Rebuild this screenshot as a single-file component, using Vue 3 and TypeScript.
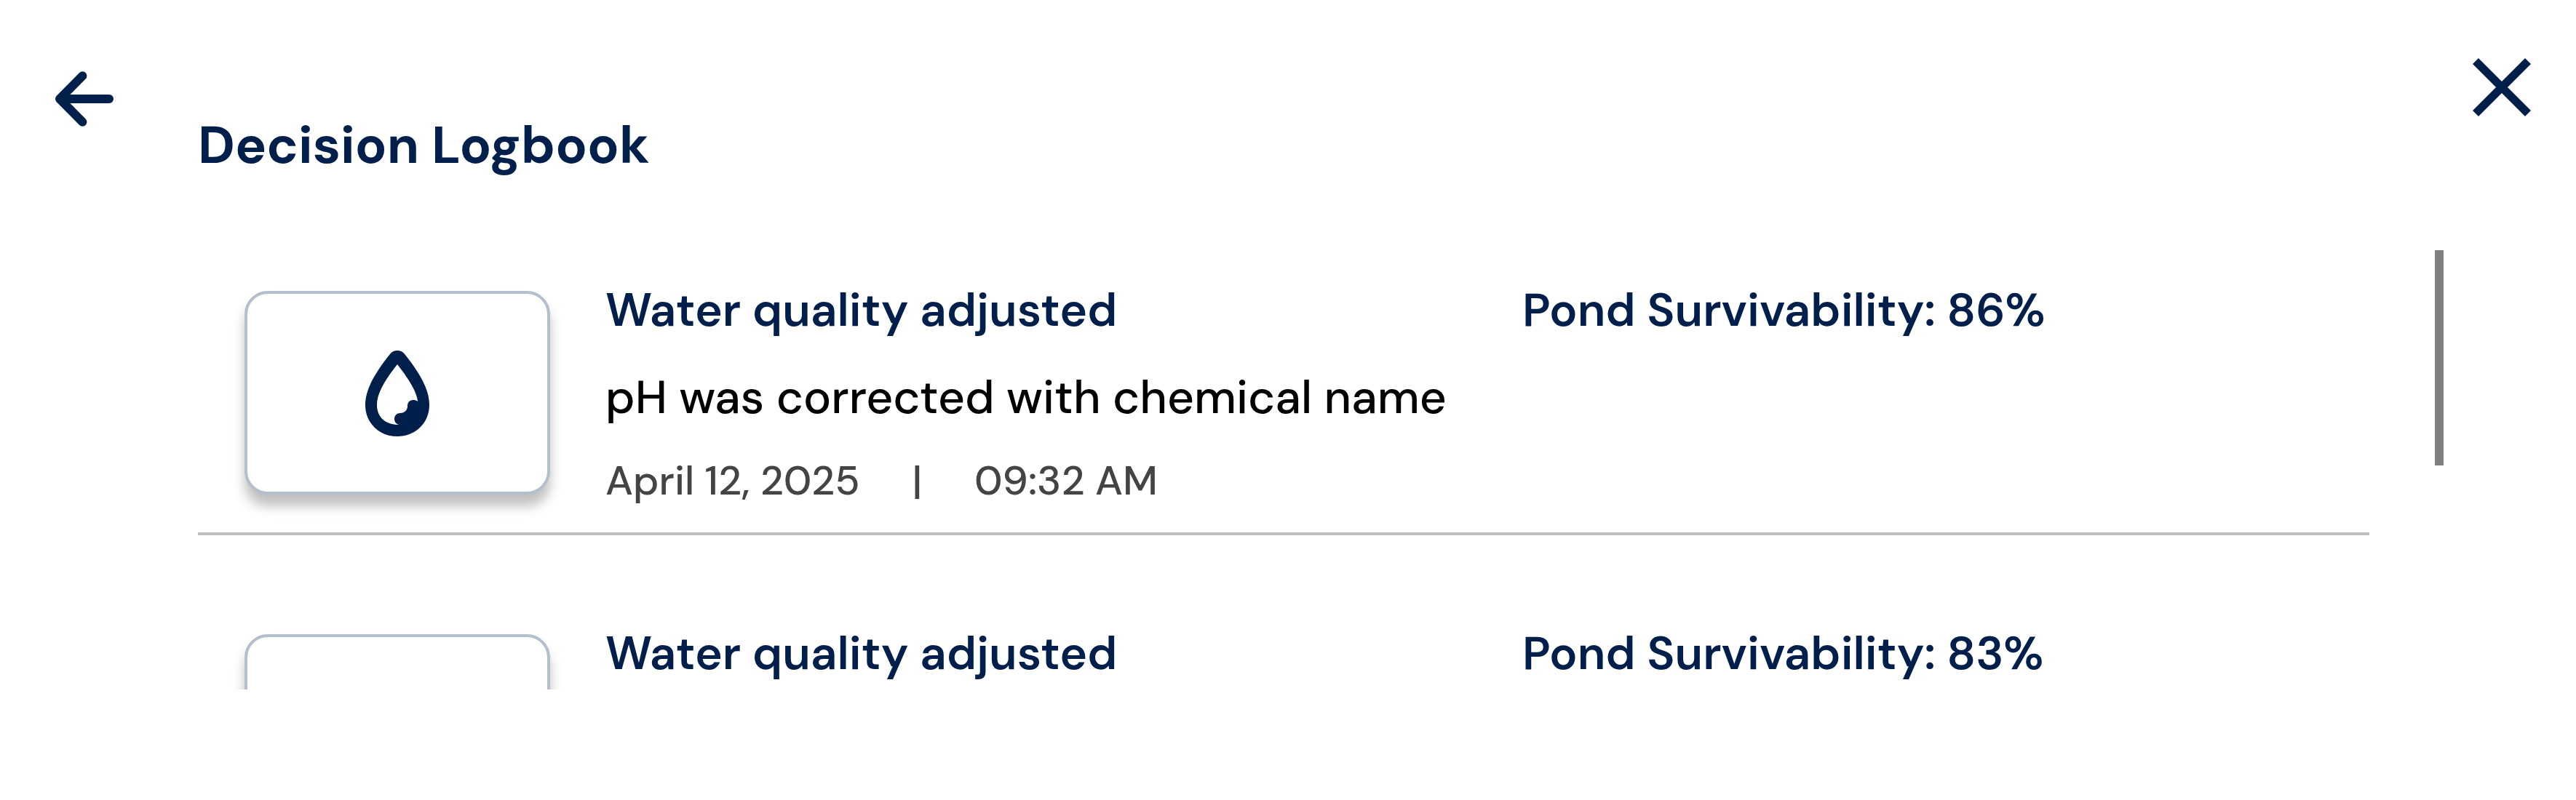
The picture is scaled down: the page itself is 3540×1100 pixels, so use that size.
<script setup lang="ts">
interface LogEntry {
  id: number
  title: string
  survivability: number
  detail?: string
  date?: string
  time?: string
}

const entries: LogEntry[] = [
  {
    id: 1,
    title: 'Water quality adjusted',
    survivability: 86,
    detail: 'pH was corrected with chemical name',
    date: 'April 12, 2025',
    time: '09:32 AM',
  },
  {
    id: 2,
    title: 'Water quality adjusted',
    survivability: 83,
  },
]
</script>

<template>
  <main class="logbook">
    <header class="topbar">
      <button class="icon-button back" type="button" aria-label="Back">
        <svg width="80" height="76" viewBox="0 0 80 76" fill="none">
          <path
            d="M37.4 6.2 6 38l31.4 31.8M8 38h66"
            stroke="currentColor"
            stroke-width="12"
            stroke-linecap="round"
            stroke-linejoin="round"
          />
        </svg>
      </button>
      <h1 class="heading">Decision Logbook</h1>
      <button class="icon-button close" type="button" aria-label="Close">
        <svg width="80" height="80" viewBox="0 0 80 80" fill="none">
          <path d="M4 4l72 72M76 4L4 76" stroke="currentColor" stroke-width="11.3" />
        </svg>
      </button>
    </header>

    <section class="viewport">
      <ul class="entries">
        <li v-for="entry in entries" :key="entry.id" class="entry">
          <div class="tile">
            <svg width="88" height="118" viewBox="0 0 264 354">
              <path
                fill="currentColor"
                fill-rule="evenodd"
                d="M132 0C120 0 111 4 104 12C44 87 0 157 0 224C0 299 58 354 132 354S264 299 264 224C264 157 220 87 160 12C153 4 144 0 132 0ZM132 57C84 118 48 174 48 224C48 273 81 306 139 306C127 303 120 294 120 282C120 268 130 258 144 258C162 258 174 246 174 229C174 213 184 204 197 204C205 204 211 206 216 210C214 169 169 104 132 57Z"
              />
            </svg>
          </div>
          <div class="info">
            <h2 class="title">{{ entry.title }}</h2>
            <p v-if="entry.detail" class="detail">{{ entry.detail }}</p>
            <p v-if="entry.date" class="meta">
              <span>{{ entry.date }}</span>
              <span class="bar">|</span>
              <span>{{ entry.time }}</span>
            </p>
          </div>
          <p class="score">Pond Survivability: {{ entry.survivability }}%</p>
        </li>
      </ul>
      <div class="thumb"></div>
    </section>
  </main>
</template>

<style>
body {
  background: #fff;
}
</style>

<style scoped>
.logbook {
  width: 3540px;
  height: 1100px;
  overflow: hidden;
  background: #fff;
  color: #001f4b;
  font-family: "DM Sans", Inter, "Liberation Sans", sans-serif;
}

.topbar {
  display: flex;
  align-items: flex-start;
  box-sizing: border-box;
  height: 344px;
  padding: 80px 62px 0 76px;
}

.icon-button {
  padding: 0;
  border: 0;
  background: none;
  color: inherit;
}

.icon-button svg,
.tile svg {
  display: block;
}

.back {
  margin-top: 18px;
}

.heading {
  flex: 1;
  margin: 71px 0 0 116px;
  font-size: 72px;
  font-weight: 700;
  line-height: 97px;
}

.viewport {
  display: flex;
  align-items: flex-start;
  gap: 90px;
  height: 604px;
  padding-left: 272px;
  overflow: hidden;
}

.entries {
  display: flex;
  flex-direction: column;
  gap: 80px;
  width: 2984px;
  margin: 0;
  padding: 0;
  list-style: none;
}

.entry {
  display: flex;
  align-items: flex-start;
  box-sizing: border-box;
  height: 392px;
  padding: 43px 0 0 64px;
  border-bottom: 4px solid #bfbfbf;
}

.tile {
  display: flex;
  align-items: center;
  justify-content: center;
  box-sizing: border-box;
  width: 420px;
  height: 280px;
  margin: 13px 76px 0 0;
  padding-top: 2px;
  border: 4px solid #b3bfcc;
  border-radius: 32px;
  background: #fff;
  box-shadow: 0 16px 16px rgba(0, 0, 0, 0.25);
}

.info {
  width: 1260px;
}

.title,
.detail,
.score {
  margin: 0;
  font-size: 64px;
  line-height: 80px;
  white-space: nowrap;
}

.title,
.score {
  font-weight: 600;
}

.detail {
  margin-top: 40px;
  color: #000;
  font-weight: 500;
}

.meta {
  display: flex;
  margin: 39px 0 0;
  color: #444;
  font-size: 56px;
  font-weight: 500;
  line-height: 70px;
  white-space: nowrap;
}

.bar {
  width: 157.4px;
  text-align: center;
}

.thumb {
  width: 12px;
  height: 296px;
  background: #808080;
}
</style>
